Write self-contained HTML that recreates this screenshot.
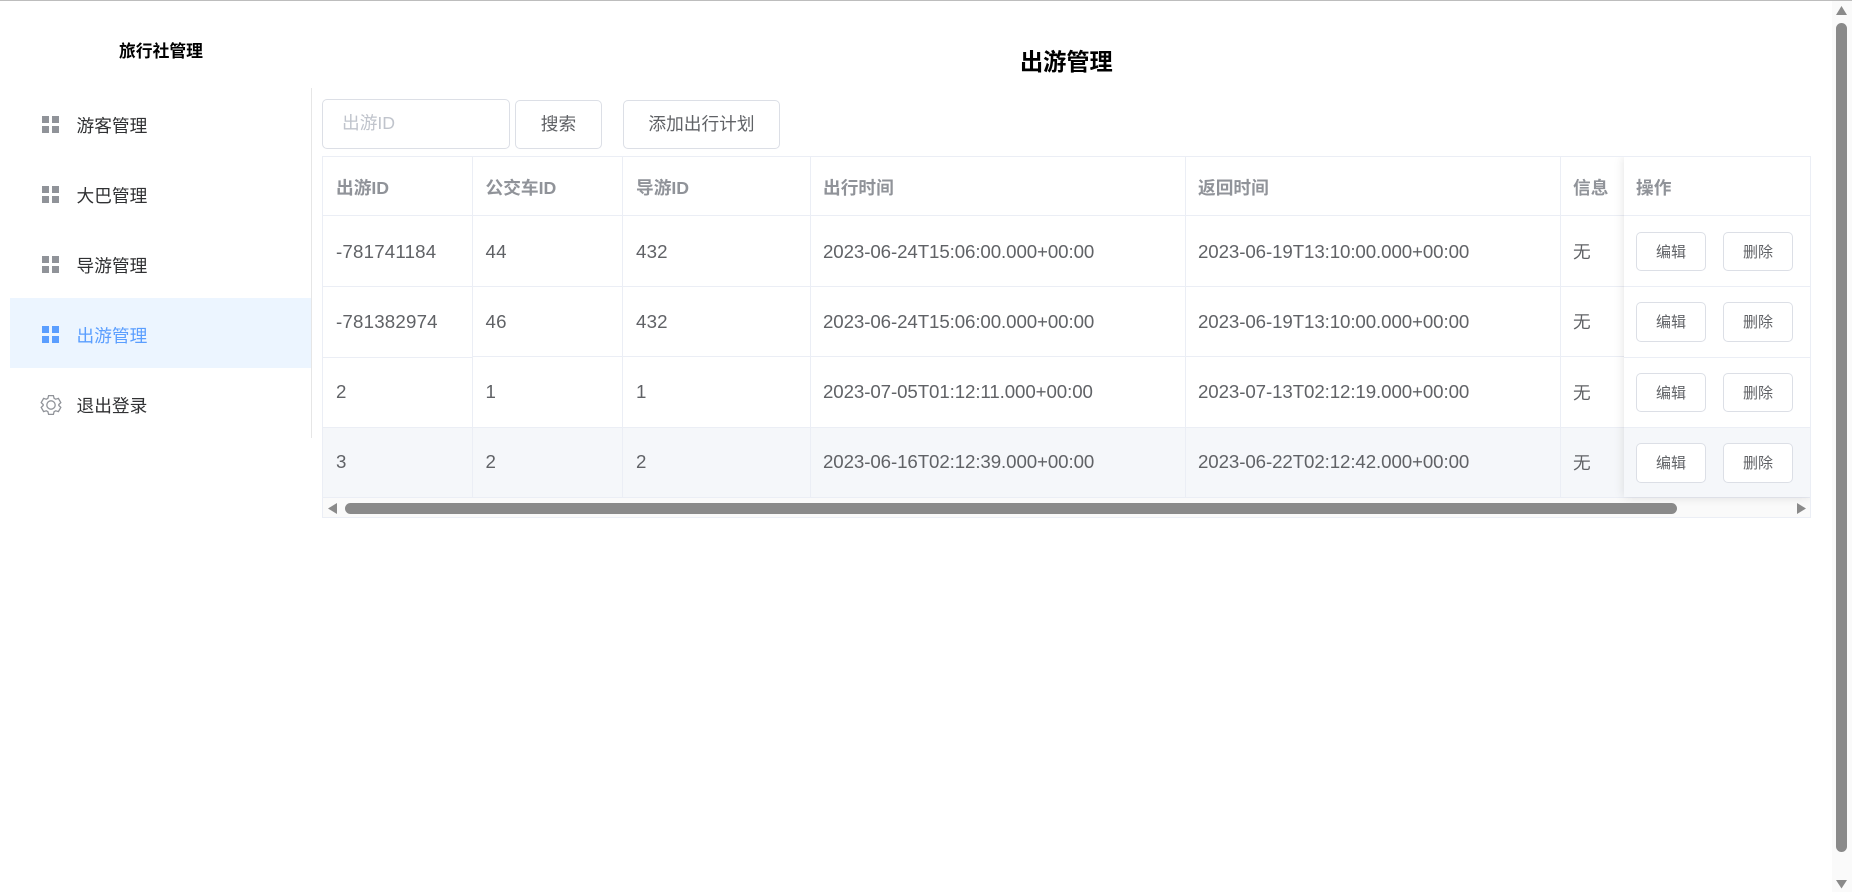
<!DOCTYPE html>
<html lang="zh-CN">
<head>
<meta charset="utf-8">
<title>出游管理</title>
<style>
html,body{margin:0;padding:0;background:#fff;width:1852px;height:892px;overflow:hidden}
body{position:relative;font-family:"Liberation Sans","Noto Sans CJK SC",sans-serif;font-size:17.7px;color:#606266}
div,span{position:absolute;box-sizing:border-box}
.t{white-space:nowrap;line-height:24px;height:24px}
.m{color:#303133;left:76.5px}
.th{font-weight:bold;color:#909399}
.hl{height:1px;background:#ebeef5}
.vl{width:1px;background:#ebeef5;top:157px;height:340px}
.btn{border:1px solid #dcdfe6;border-radius:5px;background:#fff;text-align:center;color:#606266}
.sb{height:39px;width:70px;font-size:15px;line-height:40px}
.ic{width:18px;height:18px}
.ic i{position:absolute;width:7px;height:7.5px;background:#909399}
.ic i:nth-child(1){left:0;top:0}.ic i:nth-child(2){left:10.6px;top:0}.ic i:nth-child(3){left:0;top:10.3px}.ic i:nth-child(4){left:10.6px;top:10.3px}
.d{font-size:18.7px;letter-spacing:-.09px}
.n{font-size:18.7px;letter-spacing:.2px}
</style>
</head>
<body>
<div style="left:0;top:0;width:1852px;height:1px;background:#bdbdbd"></div>

<!-- sidebar -->
<div class="t" style="left:119px;top:40px;font-size:16.8px;font-weight:bold;color:#000">旅行社管理</div>
<div style="left:311px;top:88px;width:1px;height:350px;background:#e6e6e6"></div>
<div style="left:10px;top:298px;width:301px;height:70px;background:#ecf5ff"></div>

<div class="ic" style="left:41.7px;top:115.7px"><i></i><i></i><i></i><i></i></div>
<div class="t m" style="top:114px">游客管理</div>
<div class="ic" style="left:41.7px;top:185.7px"><i></i><i></i><i></i><i></i></div>
<div class="t m" style="top:184px">大巴管理</div>
<div class="ic" style="left:41.7px;top:255.7px"><i></i><i></i><i></i><i></i></div>
<div class="t m" style="top:254px">导游管理</div>
<div class="ic" style="left:41.7px;top:325.7px"><i style="background:#5a9eff"></i><i style="background:#5a9eff"></i><i style="background:#5a9eff"></i><i style="background:#5a9eff"></i></div>
<div class="t m" style="top:323.5px;color:#5a9eff">出游管理</div>
<svg style="position:absolute;left:39.5px;top:394px" width="22" height="22" viewBox="0 0 22 22" fill="none" stroke="#909399" stroke-width="1.3">
<path d="M8.6 1.6h4.8l.7 2.7 1.6.9 2.7-.8 2.4 4.2-2 1.9v1l2 1.9-2.4 4.2-2.7-.8-1.6.9-.7 2.7H8.6l-.7-2.7-1.6-.9-2.7.8-2.4-4.2 2-1.9v-1l-2-1.9 2.4-4.2 2.7.8 1.6-.9z"/>
<circle cx="11" cy="11" r="4.2"/>
</svg>
<div class="t m" style="top:394px">退出登录</div>

<!-- title -->
<div class="t" style="left:1020px;top:50px;font-size:23.2px;font-weight:bold;color:#000">出游管理</div>

<!-- toolbar -->
<div style="left:322px;top:99px;width:188px;height:50px;border:1px solid #dcdfe6;border-radius:5px"></div>
<div class="t" style="left:342px;top:111px;color:#c0c4cc">出游ID</div>
<div class="btn" style="left:515px;top:100px;width:87px;height:49px;line-height:47px">搜索</div>
<div class="btn" style="left:623px;top:100px;width:157px;height:49px;line-height:47px">添加出行计划</div>

<!-- table -->
<div style="left:322px;top:156px;width:1489px;height:362px;border:1px solid #ebeef5"></div>
<div style="left:323px;top:498px;width:1487px;height:19px;background:#fafafa"></div>
<div style="left:323px;top:428px;width:1487px;height:69px;background:#f5f7fa"></div>
<div class="hl" style="left:323px;top:215px;width:1487px"></div>
<div class="hl" style="left:323px;top:286px;width:1487px"></div>
<div class="hl" style="left:323px;top:357px;width:149px"></div>
<div class="hl" style="left:473px;top:356px;width:1337px"></div>
<div class="hl" style="left:323px;top:427px;width:1487px"></div>
<div class="hl" style="left:323px;top:497px;width:1487px"></div>
<div class="vl" style="left:472px"></div>
<div class="vl" style="left:622px"></div>
<div class="vl" style="left:810px"></div>
<div class="vl" style="left:1185px"></div>
<div class="vl" style="left:1560px"></div>

<div class="t th" style="left:336px;top:176px">出游ID</div>
<div class="t th" style="left:485.5px;top:176px">公交车ID</div>
<div class="t th" style="left:636px;top:176px">导游ID</div>
<div class="t th" style="left:823px;top:176px">出行时间</div>
<div class="t th" style="left:1198px;top:176px">返回时间</div>
<div class="t th" style="left:1573px;top:176px">信息</div>

<div class="t n" style="left:336px;top:239.5px">-781741184</div>
<div class="t n" style="left:485.5px;top:239.5px">44</div>
<div class="t n" style="left:636px;top:239.5px">432</div>
<div class="t d" style="left:823px;top:239.5px">2023-06-24T15:06:00.000+00:00</div>
<div class="t d" style="left:1198px;top:239.5px">2023-06-19T13:10:00.000+00:00</div>
<div class="t" style="left:1573px;top:240px">无</div>

<div class="t n" style="left:336px;top:309.5px">-781382974</div>
<div class="t n" style="left:485.5px;top:309.5px">46</div>
<div class="t n" style="left:636px;top:309.5px">432</div>
<div class="t d" style="left:823px;top:309.5px">2023-06-24T15:06:00.000+00:00</div>
<div class="t d" style="left:1198px;top:309.5px">2023-06-19T13:10:00.000+00:00</div>
<div class="t" style="left:1573px;top:310px">无</div>

<div class="t n" style="left:336px;top:380px">2</div>
<div class="t n" style="left:485.5px;top:380px">1</div>
<div class="t n" style="left:636px;top:380px">1</div>
<div class="t d" style="left:823px;top:380px">2023-07-05T01:12:11.000+00:00</div>
<div class="t d" style="left:1198px;top:380px">2023-07-13T02:12:19.000+00:00</div>
<div class="t" style="left:1573px;top:381px">无</div>

<div class="t n" style="left:336px;top:450px">3</div>
<div class="t n" style="left:485.5px;top:450px">2</div>
<div class="t n" style="left:636px;top:450px">2</div>
<div class="t d" style="left:823px;top:450px">2023-06-16T02:12:39.000+00:00</div>
<div class="t d" style="left:1198px;top:450px">2023-06-22T02:12:42.000+00:00</div>
<div class="t" style="left:1573px;top:451px">无</div>

<!-- fixed right column -->
<div style="left:1624px;top:157px;width:186px;height:340px;background:#fff;box-shadow:0 0 10px rgba(0,0,0,.12);clip-path:inset(0 0 -12px -14px)"></div>
<div style="left:1624px;top:428px;width:186px;height:69px;background:#f5f7fa"></div>
<div class="hl" style="left:1624px;top:215px;width:186px"></div>
<div class="hl" style="left:1624px;top:286px;width:186px"></div>
<div class="hl" style="left:1624px;top:357px;width:186px"></div>
<div class="hl" style="left:1624px;top:427px;width:186px"></div>
<div class="t th" style="left:1636px;top:176px">操作</div>
<div class="btn sb" style="left:1636px;top:232px">编辑</div>
<div class="btn sb" style="left:1723px;top:232px">删除</div>
<div class="btn sb" style="left:1636px;top:302px;height:40px">编辑</div>
<div class="btn sb" style="left:1723px;top:302px;height:40px">删除</div>
<div class="btn sb" style="left:1636px;top:373px">编辑</div>
<div class="btn sb" style="left:1723px;top:373px">删除</div>
<div class="btn sb" style="left:1636px;top:443px;height:40px">编辑</div>
<div class="btn sb" style="left:1723px;top:443px;height:40px">删除</div>

<!-- horizontal scrollbar -->
<svg style="position:absolute;left:323px;top:498px" width="1487" height="19">
<path d="M5 10.5 L14 5 V16 Z" fill="#8a8a8a"/>
<rect x="22" y="5" width="1332" height="11" rx="5.5" fill="#8a8a8a"/>
<path d="M1483 10.5 L1474 5 V16 Z" fill="#8a8a8a"/>
</svg>

<!-- page scrollbar -->
<div style="left:1832px;top:1px;width:20px;height:891px;background:#fafafa"></div>
<svg style="position:absolute;left:1832px;top:0" width="20" height="892">
<path d="M4 15 L9.5 6 L15 15 Z" fill="#8a8a8a"/>
<rect x="4" y="23" width="11" height="829" rx="5.5" fill="#8a8a8a"/>
<path d="M4 880 L15 880 L9.5 888.5 Z" fill="#8a8a8a"/>
</svg>
</body>
</html>
